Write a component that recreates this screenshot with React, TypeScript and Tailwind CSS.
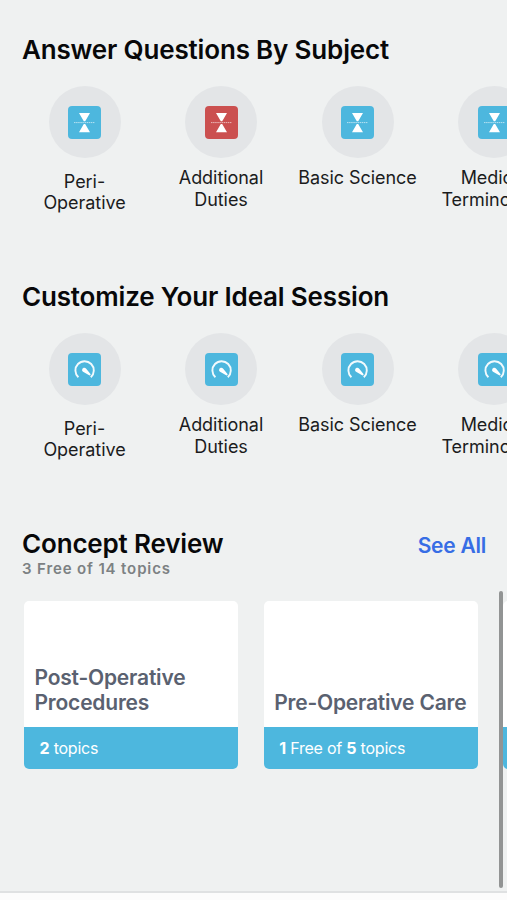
import type { FC, ReactNode } from "react";
import clsx from "clsx";

interface Subject {
  name: string;
  lines: string[];
  highlighted?: boolean;
  offset?: boolean;
}

const subjects: Subject[] = [
  { name: "peri", lines: ["Peri-", "Operative"], offset: true },
  { name: "duties", lines: ["Additional", "Duties"], highlighted: true },
  { name: "science", lines: ["Basic Science"] },
  { name: "terminology", lines: ["Medical", "Terminology"] },
];

const HourglassIcon: FC = () => (
  <svg viewBox="0 0 33 33" className="size-full" aria-hidden="true">
    <path d="M11 7h11l-4.8 8.2h-1.4zM11 26.2h11L17.2 18h-1.4z" fill="white" />
    <path
      d="M6 16.6h21"
      stroke="white"
      strokeOpacity="0.6"
      strokeWidth="1"
      strokeDasharray="1.5 0.6"
    />
  </svg>
);

const GaugeIcon: FC = () => (
  <svg viewBox="0 0 33 33" className="size-full" fill="none" aria-hidden="true">
    <path
      d="M10.4 24.2A9.2 9.2 0 1 1 22.8 24.2"
      stroke="white"
      strokeOpacity="0.92"
      strokeWidth="1.9"
    />
    <path
      d="M14.2 16.4c.6-1.8 2.8-2 4-.7l4.3 5.4c.4.8-.5 1.6-1.3 1.2l-5.7-3.4c-1.1-.6-1.7-1.5-1.3-2.5z"
      fill="white"
    />
  </svg>
);

interface SubjectRowProps {
  title: string;
  icon: ReactNode;
  showHighlight?: boolean;
}

const SubjectRow: FC<SubjectRowProps> = ({ title, icon, showHighlight }) => (
  <section className="h-[247px] shrink-0">
    <h2 className="pl-[22px] text-[26px] leading-9 font-semibold tracking-[-0.17px] whitespace-nowrap">
      {title}
    </h2>
    <div className="mt-[18px] flex w-max gap-[6.5px] pl-[19.5px]">
      {subjects.map((subject) => (
        <div key={subject.name} className="flex w-[130px] flex-col items-center">
          <div className="flex size-[72px] items-center justify-center rounded-full bg-[#e3e5e7]">
            <div
              className={clsx(
                "size-[33px] overflow-hidden rounded-[4px]",
                showHighlight && subject.highlighted
                  ? "bg-[#cb5050]"
                  : "bg-[#4db7de]"
              )}
            >
              {icon}
            </div>
          </div>
          <div
            className={clsx(
              "text-center text-[18px] tracking-[-0.05px] whitespace-nowrap text-[#1b1c1d]",
              subject.offset
                ? "mt-[13px] leading-[21px]"
                : "mt-[9px] leading-[21.6px]"
            )}
          >
            {subject.lines.map((line) => (
              <div key={line}>{line}</div>
            ))}
          </div>
        </div>
      ))}
    </div>
  </section>
);

interface TopicCardProps {
  title?: ReactNode;
  children?: ReactNode;
}

const TopicCard: FC<TopicCardProps> = ({ title, children }) => (
  <div className="flex h-[168px] w-[214px] shrink-0 flex-col overflow-hidden rounded-[5px] bg-white">
    <div className="flex flex-1 items-end px-[10.5px] pb-[12px] text-[21px] leading-[25px] font-semibold tracking-[-0.2px] whitespace-nowrap text-[#5a6170]">
      {title}
    </div>
    <div className="h-[42px] bg-[#4db7de] pl-[15.5px] text-[16px] leading-[42px] tracking-[-0.22px] whitespace-nowrap text-white">
      {children}
    </div>
  </div>
);

export default function App() {
  return (
    <main className="relative flex h-[900px] w-[507px] flex-col overflow-hidden bg-[#eff1f1] pt-8 font-['Inter',sans-serif] text-[#080809]">
      <SubjectRow
        title="Answer Questions By Subject"
        icon={<HourglassIcon />}
        showHighlight
      />
      <SubjectRow title="Customize Your Ideal Session" icon={<GaugeIcon />} />

      <section className="flex-1">
        <div className="flex justify-between pr-[21px] pl-[22px]">
          <div>
            <h2 className="text-[26px] leading-9 font-semibold tracking-[-0.17px]">
              Concept Review
            </h2>
            <p className="-mt-[3px] text-[15px] leading-5 font-semibold tracking-[0.87px] text-[#7c8183]">
              3 Free of 14 topics
            </p>
          </div>
          <a
            href="#"
            className="mt-[2px] text-[21px] leading-9 font-semibold tracking-[-0.25px] text-[#376de5]"
          >
            See All
          </a>
        </div>

        <div className="mt-[22px] flex gap-[25.7px] overflow-hidden pl-6">
          <TopicCard
            title={
              <>
                Post-Operative
                <br />
                Procedures
              </>
            }
          >
            <b>2</b> topics
          </TopicCard>
          <TopicCard title="Pre-Operative Care">
            <b>1</b> Free of <b>5</b> topics
          </TopicCard>
          <TopicCard />
        </div>
      </section>

      <footer className="h-[9px] shrink-0 border-t-2 border-[#dfe1e2] bg-[#fcfcfc]" />

      {/* Scroll indicator */}
      <div className="absolute top-[591px] right-[4px] h-[297px] w-[4px] rounded-full bg-[#929494]" />
    </main>
  );
}
